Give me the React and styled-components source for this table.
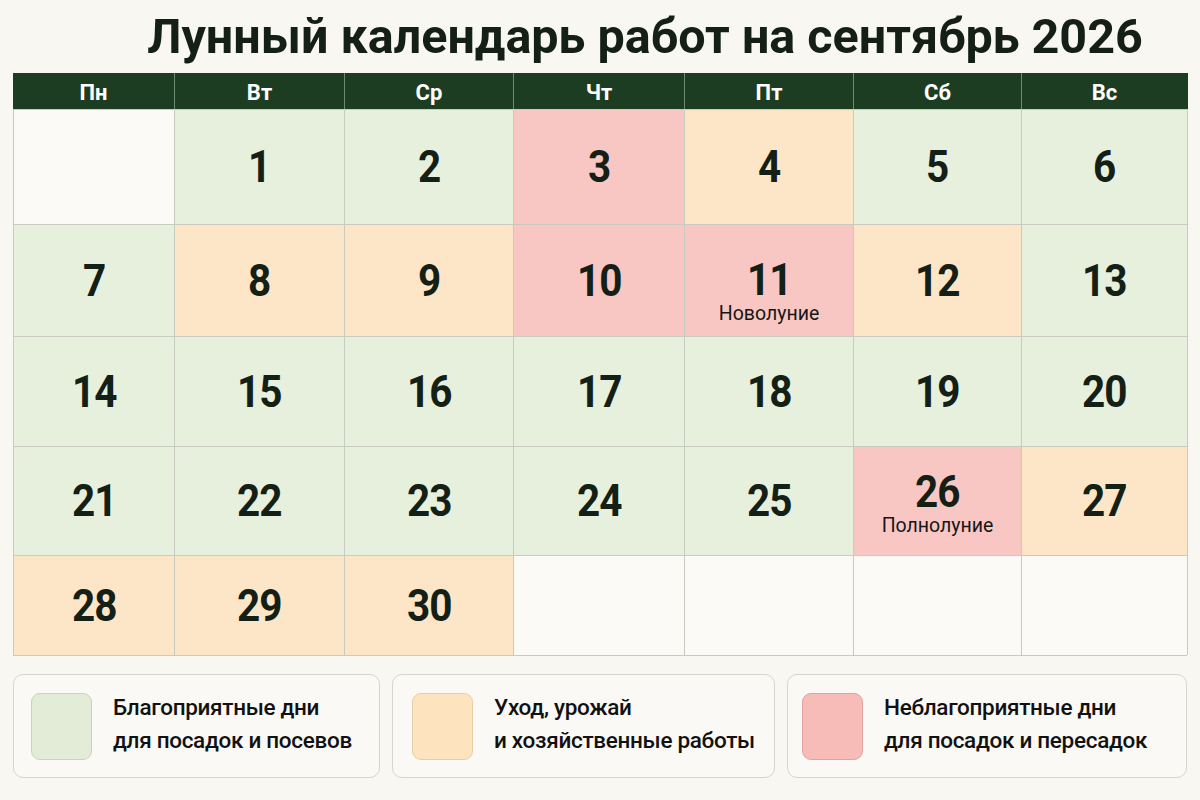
import React from "react";
import styled, { createGlobalStyle } from "styled-components";

const Global = createGlobalStyle`
  html, body { margin: 0; padding: 0; background: #f9f7f2; }
  body { font-family: Roboto, "Noto Sans", "Liberation Sans", sans-serif; color: #142015; }
`;

const Page = styled.div`
  width: 1200px;
  height: 800px;
  box-sizing: border-box;
  padding: 0 13px;
  background: #f9f7f2;
  display: flex;
  flex-direction: column;
`;

const Title = styled.h1`
  margin: 0;
  height: 73px;
  display: flex;
  align-items: center;
  justify-content: center;
  padding-left: 90px;
  font-size: 48.5px;
  font-weight: 700;
  letter-spacing: 0;
  color: #142015;
`;

const COLS = "161px 170px 169px 171px 169px 168px 166px";

const Calendar = styled.div`
  display: grid;
  grid-template-columns: ${COLS};
  grid-template-rows: 36px 115px 112px 110px 109px 100px;
  border-left: 1px solid #c9cac0;
  border-bottom: 1px solid #c9cac0;
`;

const DayName = styled.div`
  background: #1c3d22;
  color: #ffffff;
  font-size: 22px;
  font-weight: 700;
  padding-top: 2px;
  display: flex;
  align-items: center;
  justify-content: center;
  border-right: 1px solid ${(p) => (p.$last ? "#1c3d22" : "#6f8a72")};
  margin-left: ${(p) => (p.$first ? "-1px" : "0")};
`;

const palette = {
  good: "#e7f0dd",
  care: "#fde6c7",
  bad: "#f9c7c3",
  empty: "#fbfaf7",
};

const Cell = styled.div`
  background: ${(p) => palette[p.$kind]};
  border-right: 1px solid #c9cac0;
  border-top: 1px solid #c9cac0;
  display: flex;
  flex-direction: column;
  align-items: center;
  justify-content: center;
`;

const Num = styled.div`
  font-size: 44px;
  font-weight: 700;
  line-height: 36px;
  letter-spacing: -1px;
  transform: scaleX(0.92);
  color: #142015;
`;

const Note = styled.div`
  font-size: 19.5px;
  font-weight: 400;
  line-height: 20px;
  margin-top: 6px;
  margin-bottom: ${(p) => -p.$pull}px;
  color: #161616;
`;

const Legend = styled.div`
  margin-top: 18px;
  display: grid;
  grid-template-columns: 367fr 383fr 400fr;
  gap: 12px;
`;

const LegendCard = styled.div`
  height: 104px;
  box-sizing: border-box;
  border: 1px solid #d6d5cf;
  border-radius: 10px;
  background: #faf9f5;
  display: flex;
  align-items: center;
  padding-left: ${(p) => p.$pad}px;
  gap: 21px;
`;

const Swatch = styled.div`
  width: 61px;
  height: 67px;
  flex: none;
  border-radius: 9px;
  background: ${(p) => p.$color};
  border: 1px solid ${(p) => p.$border};
  box-sizing: border-box;
`;

const LegendText = styled.div`
  font-size: 22.5px;
  font-weight: 500;
  line-height: 33px;
  padding-bottom: 5px;
  color: #111;
  letter-spacing: -0.3px;
`;

const days = ["Пн", "Вт", "Ср", "Чт", "Пт", "Сб", "Вс"];

const kinds = {
  1: "good", 2: "good", 3: "bad", 4: "care", 5: "good", 6: "good",
  7: "good", 8: "care", 9: "care", 10: "bad", 11: "bad", 12: "care", 13: "good",
  14: "good", 15: "good", 16: "good", 17: "good", 18: "good", 19: "good", 20: "good",
  21: "good", 22: "good", 23: "good", 24: "good", 25: "good", 26: "bad", 27: "care",
  28: "care", 29: "care", 30: "care",
};

const notes = {
  11: { text: "Новолуние", pull: 24 },
  26: { text: "Полнолуние", pull: 7 },
};

const cells = [];
cells.push(null);
for (let d = 1; d <= 30; d++) cells.push(d);
while (cells.length < 35) cells.push(null);

const legend = [
  { color: "#e2ecd7", border: "#c7d3bd", pad: 17, lines: ["Благоприятные дни", "для посадок и посевов"] },
  { color: "#fde4bf", border: "#e6cfa6", pad: 19, lines: ["Уход, урожай", "и хозяйственные работы"] },
  { color: "#f8bcb8", border: "#e0a4a0", pad: 14, lines: ["Неблагоприятные дни", "для посадок и пересадок"] },
];

export default function App() {
  return (
    <Page>
      <Global />
      <Title>Лунный календарь работ на сентябрь 2026</Title>
      <Calendar>
        {days.map((d, i) => (
          <DayName key={d} $first={i === 0} $last={i === 6}>{d}</DayName>
        ))}
        {cells.map((d, i) =>
          d ? (
            <Cell key={i} $kind={kinds[d]}>
              <Num>{d}</Num>
              {notes[d] && <Note $pull={notes[d].pull}>{notes[d].text}</Note>}
            </Cell>
          ) : (
            <Cell key={i} $kind="empty" />
          )
        )}
      </Calendar>
      <Legend>
        {legend.map((l, i) => (
          <LegendCard key={i} $pad={l.pad}>
            <Swatch $color={l.color} $border={l.border} />
            <LegendText>
              {l.lines[0]}
              <br />
              {l.lines[1]}
            </LegendText>
          </LegendCard>
        ))}
      </Legend>
    </Page>
  );
}
